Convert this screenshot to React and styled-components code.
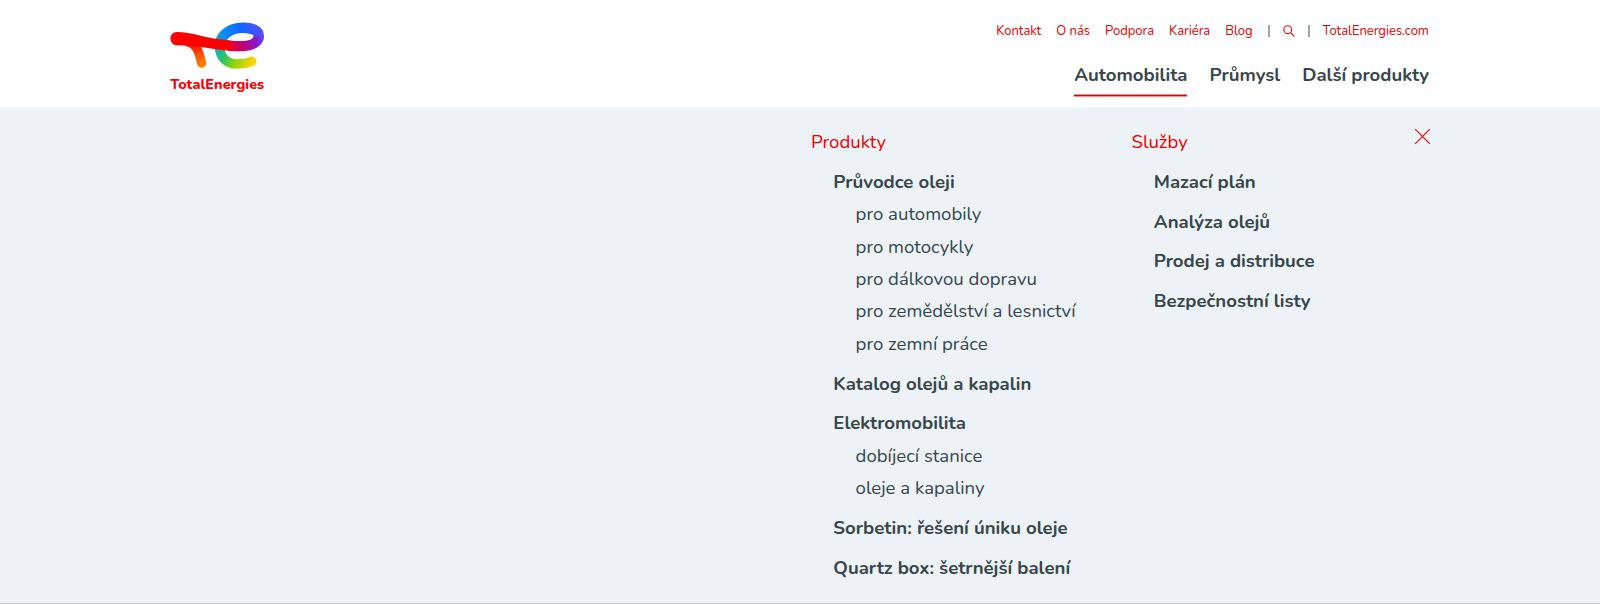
import React from 'react';
import styled, { createGlobalStyle } from 'styled-components';

const GlobalStyle = createGlobalStyle`
  * {
    box-sizing: border-box;
  }
  body {
    margin: 0;
    background: #fff;
    color: #374649;
    font-family: Nunito, "Open Sans", sans-serif;
  }
  a {
    color: inherit;
    text-decoration: none;
  }
  ul {
    list-style: none;
    margin: 0;
    padding: 0;
  }
`;

const Page = styled.div`
  height: 604px;
  display: flex;
  flex-direction: column;
  overflow: hidden;
`;

const Container = styled.div`
  width: 1260px;
  margin: 0 auto;
  display: flex;
`;

const Header = styled.header`
  flex: none;
  height: 108px;
  border-bottom: 1px solid #f5f8fa;
`;

const HeaderInner = styled(Container)`
  justify-content: space-between;
  align-items: flex-start;
  padding-right: 1px;
`;

const LogoLink = styled.a`
  display: block;
  margin-top: 20px;

  svg {
    display: block;
  }
`;

const Navs = styled.div`
  display: flex;
  flex-direction: column;
  align-items: flex-end;
`;

const TopNav = styled.nav`
  display: flex;
  align-items: center;
  gap: 15px;
  height: 20px;
  margin-top: 21px;
  font-size: 13px;
  line-height: 20px;
  color: #ed0000;
`;

const Tools = styled.div`
  display: flex;
  align-items: center;
  gap: 13px;

  svg {
    display: block;
  }
`;

const Separator = styled.span`
  width: 2px;
  height: 12px;
  background: #9aa7a9;
`;

const MainNav = styled.nav`
  display: flex;
  gap: 22px;
  margin-top: 21px;
`;

const MainLink = styled.a`
  height: 35px;
  font-size: 18.6px;
  font-weight: 700;
  line-height: 27px;
  background: ${(props) =>
    props.$active
      ? 'linear-gradient(#f79090 1px, #e80000 1px, #e80000 2px, #f79090 2px) bottom / 100% 3px no-repeat'
      : 'none'};
`;

const MegaMenu = styled.section`
  flex: 1;
  background: #edf2f7;
  border-bottom: 1px solid #c3c7cb;
`;

const MenuInner = styled(Container)`
  padding: 18px 0 0 641px;
`;

const Column = styled.div`
  width: ${(props) => props.$width}px;
  font-size: 18.6px;
  line-height: 32.4px;
  white-space: nowrap;
`;

const ColumnTitle = styled.a`
  display: block;
  color: #ed0000;
`;

const Group = styled.li`
  margin: 7.4px 0 0 22.3px;
`;

const GroupLink = styled.a`
  display: block;
  font-weight: 700;
`;

const SubItem = styled.li`
  margin-left: 22.3px;
`;

const CloseButton = styled.button`
  display: block;
  flex: none;
  width: 17px;
  height: 17px;
  margin: 2px -1px 0 0;
  padding: 0;
  border: none;
  background: none;
  cursor: pointer;

  svg {
    display: block;
  }
`;

const topLinks = ['Kontakt', 'O nás', 'Podpora', 'Kariéra', 'Blog'];

const mainLinks = ['Automobilita', 'Průmysl', 'Další produkty'];

const columns = [
  {
    title: 'Produkty',
    width: 320.5,
    groups: [
      {
        label: 'Průvodce oleji',
        items: [
          'pro automobily',
          'pro motocykly',
          'pro dálkovou dopravu',
          'pro zemědělství a lesnictví',
          'pro zemní práce',
        ],
      },
      { label: 'Katalog olejů a kapalin' },
      { label: 'Elektromobilita', items: ['dobíjecí stanice', 'oleje a kapaliny'] },
      { label: 'Sorbetin: řešení úniku oleje' },
      { label: 'Quartz box: šetrnější balení' },
    ],
  },
  {
    title: 'Služby',
    width: 282.5,
    groups: [
      { label: 'Mazací plán' },
      { label: 'Analýza olejů' },
      { label: 'Prodej a distribuce' },
      { label: 'Bezpečnostní listy' },
    ],
  },
];

const Logo = () => (
  <svg width="96" height="74" viewBox="170 20 96 74" role="img" aria-label="TotalEnergies">
    <defs>
      <linearGradient id="upper" gradientUnits="userSpaceOnUse" x1="214" y1="46" x2="264" y2="32">
        <stop offset="0" stopColor="#12a9c8" />
        <stop offset="0.25" stopColor="#0b8cf4" />
        <stop offset="0.6" stopColor="#0f66ff" />
        <stop offset="1" stopColor="#5f4bff" />
      </linearGradient>
      <linearGradient id="lower" gradientUnits="userSpaceOnUse" x1="215" y1="47" x2="252" y2="64">
        <stop offset="0" stopColor="#14b0c4" />
        <stop offset="0.3" stopColor="#27c46c" />
        <stop offset="0.6" stopColor="#8fd40a" />
        <stop offset="1" stopColor="#ffd500" />
      </linearGradient>
      <linearGradient id="cross" gradientUnits="userSpaceOnUse" x1="228" y1="46" x2="263" y2="36">
        <stop offset="0" stopColor="#f0001c" />
        <stop offset="0.35" stopColor="#c4006e" />
        <stop offset="0.75" stopColor="#8c12c4" />
        <stop offset="1" stopColor="#5f4bff" />
      </linearGradient>
      <linearGradient id="stem" gradientUnits="userSpaceOnUse" x1="197" y1="46" x2="201" y2="66">
        <stop offset="0" stopColor="#fb1a00" />
        <stop offset="0.5" stopColor="#f9580a" />
        <stop offset="1" stopColor="#ff8200" />
      </linearGradient>
    </defs>
    <g fill="none" strokeWidth="9.2" strokeLinecap="round">
      <path d="M219.6 46C219.3 57 227 64 236.5 64C243 64 248 63 251.6 61.4" stroke="url(#lower)" strokeWidth="9.6" />
      <path
        d="M219.6 47C219.6 36 229 27.7 243 27.7C252 27.7 258.8 30.5 258.8 36"
        stroke="url(#upper)"
        strokeWidth="10.4"
        strokeLinecap="butt"
      />
      <path d="M188 42C196 43.5 198.6 50 201.6 63.2" stroke="url(#stem)" />
    </g>
    <path
      d="M228 40.2C244 42.2 253.6 41 253.6 35.8H264.1C264.1 46 254 51.3 240 51.3C236 51.3 232 51.1 228 50.7Z"
      fill="url(#cross)"
    />
    <path
      d="M177 32C191 32.4 204 37 214 38.5C220 39.3 225 39.9 230 40.4V50.8C214 49.6 196 45.4 177.5 45.3C168.2 45.3 168.2 32 177 32Z"
      fill="#ff0000"
    />
    <text
      x="170.2"
      y="88.5"
      textLength="94"
      fontFamily="Nunito, 'Open Sans', sans-serif"
      fontSize="14.4"
      fontWeight="800"
      fill="#ff0000"
    >
      TotalEnergies
    </text>
  </svg>
);

const SearchIcon = () => (
  <svg width="12" height="12" viewBox="0 0 12 12" fill="none" stroke="#ed0000" strokeWidth="1.1">
    <circle cx="4.7" cy="4.7" r="3.9" />
    <path d="M7.5 7.5L11.4 11.4" />
  </svg>
);

const CloseIcon = () => (
  <svg width="17" height="17" viewBox="0 0 17 17" fill="none" stroke="#ed0000" strokeWidth="1.1">
    <path d="M1.2 1.2L15.8 15.8M15.8 1.2L1.2 15.8" />
  </svg>
);

const App = () => {
  return (
    <Page>
      <GlobalStyle />
      <Header>
        <HeaderInner>
          <LogoLink href="#">
            <Logo />
          </LogoLink>
          <Navs>
            <TopNav>
              {topLinks.map((label) => (
                <a key={label} href="#">{label}</a>
              ))}
              <Tools>
                <Separator />
                <a href="#" aria-label="Hledat">
                  <SearchIcon />
                </a>
                <Separator />
                <a href="#">TotalEnergies.com</a>
              </Tools>
            </TopNav>
            <MainNav>
              {mainLinks.map((label, i) => (
                <MainLink key={label} href="#" $active={i === 0}>{label}</MainLink>
              ))}
            </MainNav>
          </Navs>
        </HeaderInner>
      </Header>
      <MegaMenu>
        <MenuInner>
          {columns.map((column) => (
            <Column key={column.title} $width={column.width}>
              <ColumnTitle href="#">{column.title}</ColumnTitle>
              <ul>
                {column.groups.map((group) => (
                  <Group key={group.label}>
                    <GroupLink href="#">{group.label}</GroupLink>
                    {group.items && (
                      <ul>
                        {group.items.map((item) => (
                          <SubItem key={item}>
                            <a href="#">{item}</a>
                          </SubItem>
                        ))}
                      </ul>
                    )}
                  </Group>
                ))}
              </ul>
            </Column>
          ))}
          <CloseButton aria-label="Zavřít">
            <CloseIcon />
          </CloseButton>
        </MenuInner>
      </MegaMenu>
    </Page>
  );
};

export default App;
